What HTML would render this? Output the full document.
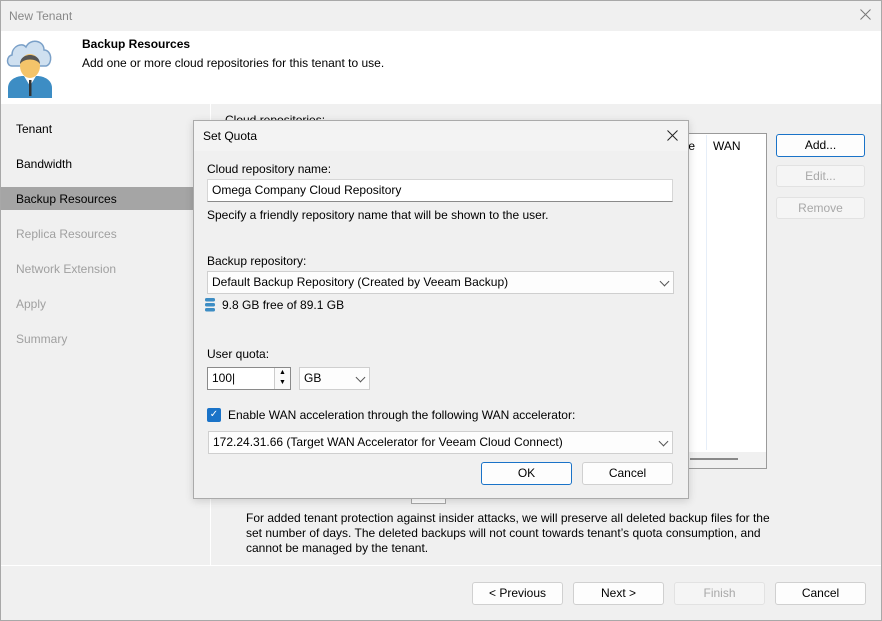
<!DOCTYPE html>
<html><head><style>
*{box-sizing:border-box;margin:0;padding:0}
body{width:882px;height:621px;position:relative;background:#f0f0f0;font-family:"Liberation Sans",sans-serif;font-size:12px;color:#000;overflow:hidden}
.a{position:absolute}
.btn{position:absolute;background:#fdfdfd;border:1px solid #d0d0d0;border-radius:3px;text-align:center;line-height:20px;font-size:12px}
.dis{color:#a8a8a8;background:#f5f5f5;border-color:#e2e2e2}
.inp{position:absolute;background:#fff;border:1px solid #d6d6d6;border-bottom-color:#8a8a8a;padding-left:4px;line-height:20px}
.dd{position:absolute;background:#fdfdfd;border:1px solid #cfcfcf;padding-left:4px;line-height:20px}
.chev{position:absolute;right:5px;top:6px;width:7px;height:7px;border-right:1px solid #555;border-bottom:1px solid #555;transform:rotate(45deg)}
</style></head><body>
<div class="a" style="left:0;top:0;width:882px;height:621px;border:1px solid #a8a8a8"></div>
<div class="a" style="left:9px;top:9px;color:#888">New Tenant</div>
<svg class="a" style="left:860px;top:9px" width="11" height="11"><path d="M0.5 0.5L10.5 10.5M10.5 0.5L0.5 10.5" stroke="#777" stroke-width="1"/></svg>
<div class="a" style="left:1px;top:31px;width:880px;height:73px;background:#fff"></div>
<svg class="a" style="left:6px;top:36px" width="48" height="62" viewBox="0 0 48 62">
<path d="M6 30 C0 30 0 20 6 19 C6 10 16 6 20 11 C24 2 38 4 38 14 C46 14 47 28 40 30 Z" fill="#cfe0f0" stroke="#7aa0c8" stroke-width="1.5"/>
<path d="M2 62 L2 52 C2 44 10 40 17 40 L31 40 C38 40 46 44 46 52 L46 62 Z" fill="#3d8dc4"/>
<path d="M18 40 L24 50 L30 40 Z" fill="#fff"/><rect x="23" y="44" width="2.5" height="16" fill="#333"/>
<ellipse cx="24" cy="30" rx="10" ry="12" fill="#f4c46a"/>
<path d="M14 28 C14 16 34 16 34 28 C30 22 18 22 14 28Z" fill="#555"/>
</svg>
<div class="a" style="left:82px;top:37px;font-weight:bold">Backup Resources</div>
<div class="a" style="left:82px;top:56px">Add one or more cloud repositories for this tenant to use.</div>
<div class="a" style="left:210px;top:104px;width:1px;height:462px;background:#fff"></div>
<div class="a" style="left:16px;top:122px">Tenant</div>
<div class="a" style="left:16px;top:157px">Bandwidth</div>
<div class="a" style="left:1px;top:187px;width:200px;height:23px;background:#a5a5a5"></div>
<div class="a" style="left:16px;top:192px">Backup Resources</div>
<div class="a" style="left:16px;top:227px;color:#a0a0a0">Replica Resources</div>
<div class="a" style="left:16px;top:262px;color:#a0a0a0">Network Extension</div>
<div class="a" style="left:16px;top:297px;color:#a0a0a0">Apply</div>
<div class="a" style="left:16px;top:332px;color:#a0a0a0">Summary</div>
<div class="a" style="left:225px;top:113px">Cloud repositories:</div>
<div class="a" style="left:410px;top:133px;width:357px;height:336px;background:#fff;border:1px solid #9a9a9a"></div>
<div class="a" style="left:706px;top:135px;width:1px;height:315px;background:#e6eef8"></div>
<div class="a" style="left:679px;top:139px">ble</div>
<div class="a" style="left:713px;top:139px">WAN</div>
<div class="a" style="left:410px;top:452px;width:356px;height:16px;background:#f0f0f0"></div>
<div class="a" style="left:690px;top:458px;width:48px;height:2px;background:#888"></div>
<div class="btn" style="left:776px;top:134px;width:89px;height:23px;border-color:#1a73c8">Add...</div>
<div class="btn dis" style="left:776px;top:165px;width:89px;height:22px">Edit...</div>
<div class="btn dis" style="left:776px;top:197px;width:89px;height:22px">Remove</div>
<div class="a" style="left:411px;top:490px;width:35px;height:14px;background:#fff;border:1px solid #aaa;border-top:none"></div>
<div class="a" style="left:246px;top:511px;line-height:15px;width:530px">For added tenant protection against insider attacks, we will preserve all deleted backup files for the set number of days. The deleted backups will not count towards tenant’s quota consumption, and cannot be managed by the tenant.</div>
<div class="a" style="left:1px;top:565px;width:880px;height:1px;background:#fff"></div>
<div class="btn" style="left:472px;top:582px;width:91px;height:23px">&lt; Previous</div>
<div class="btn" style="left:573px;top:582px;width:91px;height:23px">Next &gt;</div>
<div class="btn dis" style="left:674px;top:582px;width:91px;height:23px">Finish</div>
<div class="btn" style="left:775px;top:582px;width:91px;height:23px">Cancel</div>
<div class="a" style="left:193px;top:120px;width:496px;height:379px;background:#f0f0f0;border:1px solid #aaa;box-shadow:0 2px 8px rgba(0,0,0,.15)"></div>
<div class="a" style="left:194px;top:121px;width:494px;height:30px;background:#f3f3f3"></div>
<div class="a" style="left:203px;top:129px">Set Quota</div>
<svg class="a" style="left:667px;top:130px" width="11" height="11"><path d="M0.5 0.5L10.5 10.5M10.5 0.5L0.5 10.5" stroke="#222" stroke-width="1"/></svg>
<div class="a" style="left:207px;top:162px">Cloud repository name:</div>
<div class="inp" style="left:207px;top:179px;width:466px;height:23px">Omega Company Cloud Repository</div>
<div class="a" style="left:207px;top:208px">Specify a friendly repository name that will be shown to the user.</div>
<div class="a" style="left:207px;top:254px">Backup repository:</div>
<div class="dd" style="left:207px;top:271px;width:467px;height:23px">Default Backup Repository (Created by Veeam Backup)<span class="chev"></span></div>
<svg class="a" style="left:204px;top:297px" width="12" height="16"><rect x="1" y="1" width="10" height="3.5" rx="1.5" fill="#3d8dc4"/><rect x="1" y="6" width="10" height="3.5" rx="1.5" fill="#3d8dc4"/><rect x="1" y="11" width="10" height="3.5" rx="1.5" fill="#3d8dc4"/></svg>
<div class="a" style="left:222px;top:298px">9.8 GB free of 89.1 GB</div>
<div class="a" style="left:207px;top:347px">User quota:</div>
<div class="inp" style="left:207px;top:367px;width:84px;height:23px;border-color:#8a8a8a">100|</div>
<div class="a" style="left:274px;top:368px;width:16px;height:21px;border-left:1px solid #ccc;font-size:7px;line-height:10px;text-align:center;background:#fafafa">▲<br>▼</div>
<div class="dd" style="left:299px;top:367px;width:71px;height:23px">GB<span class="chev"></span></div>
<div class="a" style="left:207px;top:408px;width:14px;height:14px;background:#1a73c8;border-radius:2px;color:#fff;font-size:10px;line-height:14px;text-align:center">✓</div>
<div class="a" style="left:228px;top:408px">Enable WAN acceleration through the following WAN accelerator:</div>
<div class="dd" style="left:208px;top:431px;width:465px;height:23px">172.24.31.66 (Target WAN Accelerator for Veeam Cloud Connect)<span class="chev"></span></div>
<div class="btn" style="left:481px;top:462px;width:91px;height:23px;border-color:#1a73c8">OK</div>
<div class="btn" style="left:582px;top:462px;width:91px;height:23px">Cancel</div>
</body></html>
